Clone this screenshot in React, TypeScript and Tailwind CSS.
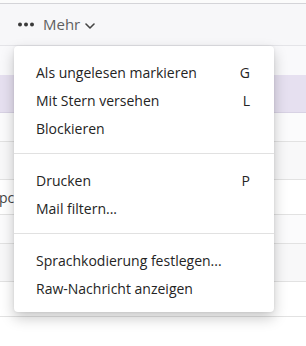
import React from "react";

const items: { label: string; key?: string }[][] = [
  [
    { label: "Als ungelesen markieren", key: "G" },
    { label: "Mit Stern versehen", key: "L" },
    { label: "Blockieren" },
  ],
  [{ label: "Drucken", key: "P" }, { label: "Mail filtern..." }],
  [{ label: "Sprachkodierung festlegen..." }, { label: "Raw-Nachricht anzeigen" }],
];

const App = () => {
  return (
    <div
      className="relative w-[306px] h-[346px] overflow-hidden bg-white"
      style={{ fontFamily: '"Open Sans", "Noto Sans", sans-serif' }}
    >
      {/* Toolbar */}
      <div className="h-[3px] bg-[#fbfbfb]" />
      <div className="h-[42px] border-t border-[#d4d4d8] bg-[#f7f7f9] flex items-center pl-[18px]">
        <svg width="16" height="5" viewBox="0 0 16 5" className="text-[#3a3a3a]">
          <circle cx="2" cy="2.5" r="2" fill="currentColor" />
          <circle cx="8" cy="2.5" r="2" fill="currentColor" />
          <circle cx="14" cy="2.5" r="2" fill="currentColor" />
        </svg>
        <span className="ml-[9px] text-[15px] text-[#5f5f5f]">Mehr</span>
        <svg width="10" height="6" viewBox="0 0 10 6" className="ml-[5px] mt-[3px] text-[#444]">
          <path d="M1 1l4 4 4-4" fill="none" stroke="currentColor" strokeWidth="1.6" strokeLinecap="round" strokeLinejoin="round" />
        </svg>
      </div>

      {/* Message list behind the menu */}
      <div className="border-t border-[#e4e4e8]">
        <div className="h-[29px] bg-[#f9f9fb]" />
        <div className="h-[38px] bg-[#e6e0f0] border-b border-[#d8d2e4]" />
        <div className="h-[29px] border-b border-[#e2e2e2] bg-[#fbfbfc]" />
        <div className="h-[38px] border-b border-[#e2e2e2] bg-[#f8f8f9]" />
        <div className="h-[35px] border-b border-[#e2e2e2] bg-white flex items-center">
          <span className="text-[14px] text-[#444] -ml-[1px]">pc</span>
        </div>
        <div className="h-[29px] border-b border-[#e2e2e2] bg-[#fbfbfc]" />
        <div className="h-[38px] border-b border-[#e2e2e2] bg-[#f8f8f9]" />
        <div className="h-[35px] border-b border-[#e2e2e2] bg-white" />
      </div>

      {/* Dropdown menu */}
      <div className="absolute left-[14px] top-[46px] w-[260px] bg-white rounded-[4px] shadow-[0_6px_14px_rgba(0,0,0,0.22),0_0_3px_rgba(0,0,0,0.08)] pt-[12px] pb-[10px]">
        {items.map((group, gi) => (
          <div key={gi}>
            {gi > 0 && <div className="h-px bg-[#e1e1e1] mt-[11px] mb-[12px]" />}
            {group.map((it) => (
              <div
                key={it.label}
                className="h-[28px] flex items-center justify-between pl-[22px] pr-[24px] text-[14px] text-[#242424]"
              >
                <span>{it.label}</span>
                {it.key && <span>{it.key}</span>}
              </div>
            ))}
          </div>
        ))}
      </div>
    </div>
  );
};

export default App;
